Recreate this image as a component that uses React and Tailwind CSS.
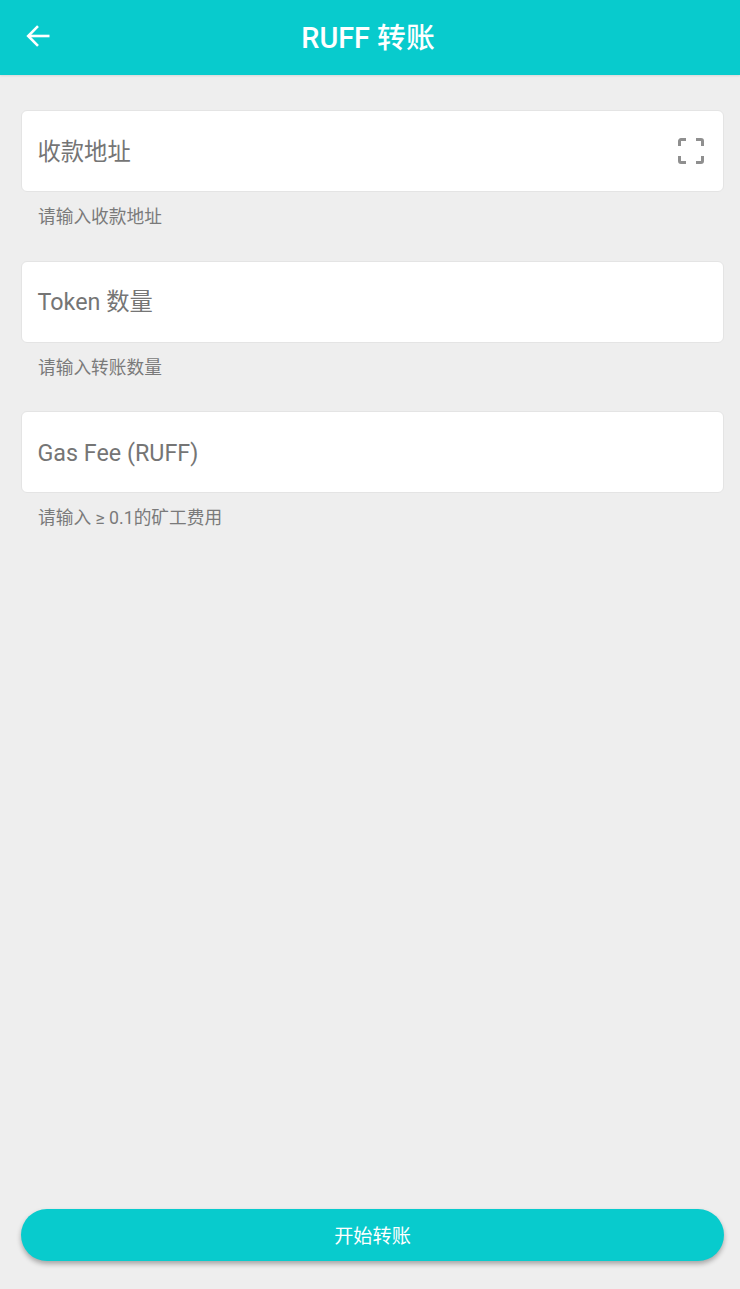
const FONT = "font-['Roboto','Noto_Sans_CJK_SC',sans-serif]";

const fields = [
  { id: 'address', label: '收款地址', hint: '请输入收款地址', scan: true },
  { id: 'amount', label: 'Token 数量', hint: '请输入转账数量' },
  { id: 'gas', label: 'Gas Fee (RUFF)', hint: '请输入 ≥ 0.1的矿工费用' },
];

const BackArrow = () => (
  <svg width="26" height="26" viewBox="0 0 26 26" fill="none" stroke="white" strokeWidth="2.6">
    <path d="M24.5 13H3" />
    <path d="M13 3.2 3.2 13l9.8 9.8" />
  </svg>
);

const ScanIcon = () => (
  <svg width="26" height="26" viewBox="0 0 26 26" fill="none" stroke="#8f8f8f" strokeWidth="3">
    <path d="M1.5 8V3a1.5 1.5 0 0 1 1.5-1.5h5" />
    <path d="M18 1.5h5A1.5 1.5 0 0 1 24.500 3v5" />
    <path d="M1.5 18v5A1.500 1.500 0 0 0 3 24.500h5" />
    <path d="M18 24.500h5a1.500 1.500 0 0 0 1.500-1.500v-5" />
  </svg>
);

const Field = ({ label, hint, scan }) => (
  <div className="mb-[33.5px]">
    <div className="flex h-[82px] items-center justify-between rounded-[6px] border border-[#e4e4e4] bg-white pl-[15.5px] pr-[19px]">
      <span className="pt-[3px] text-[23.3px] leading-none text-[#757575]">{label}</span>
      {scan && <ScanIcon />}
    </div>
    <p className="mt-[15px] h-[20px] pl-[17px] text-[17.7px] leading-[20px] text-[#7a7a7a]">{hint}</p>
  </div>
);

export default function App() {
  return (
    <div className={`${FONT} flex h-[1289px] w-[740px] flex-col bg-[#eeeeee]`}>
      <header className="relative flex h-[75px] items-center justify-center bg-[#08cbcd] shadow-[0_1px_2px_rgba(0,0,0,0.1)]">
        <button className="absolute left-[25px] top-[23px]">
          <BackArrow />
        </button>
        <h1 className="pr-[4px] pt-[2px] text-[28.8px] font-medium leading-none text-white">RUFF 转账</h1>
      </header>

      <main className="flex flex-1 flex-col pl-[21px] pr-[16px] pt-[35px]">
        {fields.map((field) => (
          <Field key={field.id} {...field} />
        ))}
      </main>

      <div className="pb-[28px] pl-[21px] pr-[16px]">
        <button className="h-[52px] w-full rounded-full bg-[#08cbcd] pt-[5px] text-[19.2px] text-white shadow-[0_3px_5px_rgba(0,0,0,0.3)]">
          开始转账
        </button>
      </div>
    </div>
  );
}
